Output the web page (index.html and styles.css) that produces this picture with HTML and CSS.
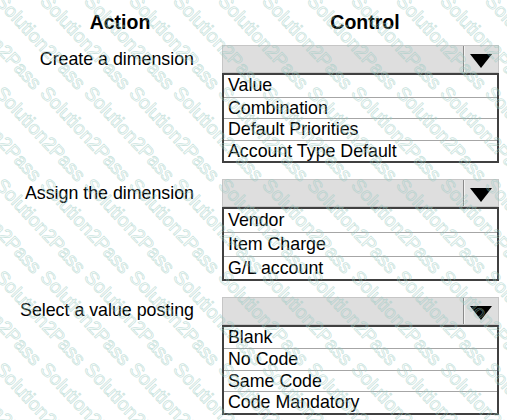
FILE: index.html
```html
<!DOCTYPE html>
<html lang="en">
<head>
    <meta charset="UTF-8">
    <title>Action / Control</title>
    <link rel="stylesheet" href="styles.css">
</head>
<body>
<div class="header">
    <div class="col-action">Action</div>
    <div class="col-control">Control</div>
</div>

<div class="block first">
    <div class="label">Create a dimension</div>
    <div class="dropdown">
        <div class="dropdown-field"></div>
        <div class="dropdown-btn"><span class="arrow"></span></div>
    </div>
    <div class="list">
        <div class="item">Value</div>
        <div class="item">Combination</div>
        <div class="item">Default Priorities</div>
        <div class="item">Account Type Default</div>
    </div>
</div>

<div class="block">
    <div class="label">Assign the dimension</div>
    <div class="dropdown">
        <div class="dropdown-field"></div>
        <div class="dropdown-btn"><span class="arrow"></span></div>
    </div>
    <div class="list tall">
        <div class="item">Vendor</div>
        <div class="item">Item Charge</div>
        <div class="item">G/L account</div>
    </div>
</div>

<div class="block">
    <div class="label">Select a value posting</div>
    <div class="dropdown">
        <div class="dropdown-field"></div>
        <div class="dropdown-btn"><span class="arrow"></span></div>
    </div>
    <div class="list">
        <div class="item">Blank</div>
        <div class="item">No Code</div>
        <div class="item">Same Code</div>
        <div class="item">Code Mandatory</div>
    </div>
</div>

<div class="watermark" id="wm"></div>

<script>
    // watermark tiles: one word every 44.5px across, 92px down
    const wm = document.getElementById('wm');
    for (let k = -2; k <= 4; k++) {
        for (let i = -2; i <= 11; i++) {
            const word = document.createElement('span');
            word.className = 'wm-word';
            word.textContent = 'Solution2Pass';
            word.style.left = (6 + i * 44.5) + 'px';
            word.style.top = (83 + k * 92) + 'px';
            wm.appendChild(word);
        }
    }
</script>
</body>
</html>
```

FILE: styles.css
```css
body {
    margin: 0;
    background-color: #fff;
    color: #000;
    font-family: "Liberation Sans", Arial, sans-serif;
    position: relative;
    width: 507px;
    height: 420px;
    overflow: hidden;
}
.header {
    display: flex;
    margin-top: 11px;
    height: 22px;
    line-height: 22px;
    font-size: 19.5px;
    font-weight: bold;
}
.col-action {
    width: 240px;
    text-align: center;
}
.col-control {
    width: 250px;
    text-align: center;
}
.block {
    display: grid;
    grid-template-columns: 194px 277px;
    column-gap: 28px;
    margin-top: 16px;
}
.block.first {
    margin-top: 12px;
}
.label {
    align-self: center;
    text-align: right;
    font-size: 17.8px;
}
.dropdown {
    display: flex;
    height: 28px;
    box-sizing: border-box;
    border: 1px solid #c6c6c6;
    background-color: #dedede;
}
.dropdown-field {
    flex: 1;
}
.dropdown-btn {
    width: 35px;
    border-left: 1px solid #8a8a8a;
    box-shadow: inset 1px 0 0 #f2f2f2;
    display: flex;
    justify-content: center;
    padding-top: 8px;
    box-sizing: border-box;
}
.arrow {
    width: 0;
    height: 0;
    border-left: 11px solid transparent;
    border-right: 11px solid transparent;
    border-top: 14px solid #000;
}
.list {
    grid-column: 2;
    border: 2px solid #404040;
    font-size: 17.8px;
}
.item {
    height: 21.5px;
    line-height: 21.5px;
    padding-left: 4px;
    box-sizing: border-box;
    white-space: nowrap;
}
.item + .item {
    border-top: 1px solid #a6a6a6;
}
.list.tall .item {
    height: 23.3px;
    line-height: 23.3px;
}
.watermark {
    position: absolute;
    left: 0;
    top: 0;
    width: 507px;
    height: 420px;
    overflow: hidden;
    pointer-events: none;
}
.wm-word {
    position: absolute;
    font-size: 19px;
    line-height: 19px;
    white-space: nowrap;
    color: transparent;
    -webkit-text-stroke: 0.8px rgba(150, 200, 190, 0.5);
    transform: rotate(47deg);
    transform-origin: 0 0;
}
```
